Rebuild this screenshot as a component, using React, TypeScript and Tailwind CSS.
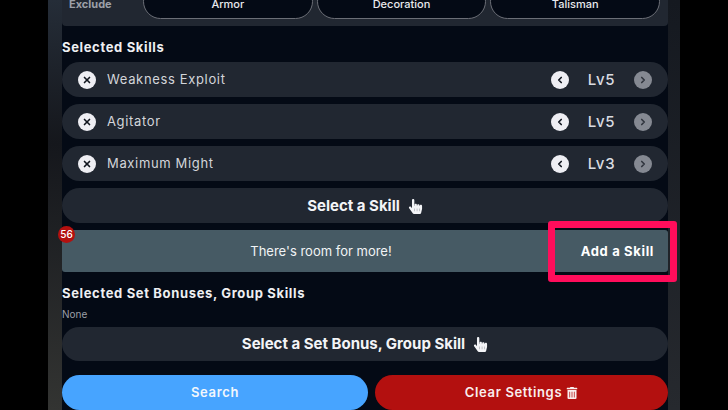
import { useState } from 'react';
import { FaHandPointer, FaTrashAlt } from 'react-icons/fa';
import { ChevronLeft, ChevronRight, X } from 'lucide-react';

interface Skill {
  name: string;
  level: number;
  max: number;
}

const initialSkills: Skill[] = [
  { name: 'Weakness Exploit', level: 5, max: 5 },
  { name: 'Agitator', level: 5, max: 5 },
  { name: 'Maximum Might', level: 3, max: 3 },
];

const excludeTypes = ['Armor', 'Decoration', 'Talisman'];

const roundButton =
  'flex size-[18px] shrink-0 items-center justify-center rounded-full bg-[#eeeef3] text-[#10151e] disabled:bg-[#858992] disabled:text-[#30353e]';

interface SkillRowProps {
  skill: Skill;
  onLevel: (level: number) => void;
  onRemove: () => void;
}

function SkillRow({ skill, onLevel, onRemove }: SkillRowProps) {
  return (
    <li className="flex h-[35px] items-center rounded-full bg-[#212731] px-4">
      <button className={roundButton} aria-label={`Remove ${skill.name}`} onClick={onRemove}>
        <X size={10} strokeWidth={4} />
      </button>
      <span className="ml-[11px] flex-1 text-[13px] tracking-wider text-[#d3d5da]">{skill.name}</span>
      <button
        className={roundButton}
        aria-label={`Lower ${skill.name}`}
        disabled={skill.level <= 1}
        onClick={() => onLevel(skill.level - 1)}
      >
        <ChevronLeft size={10} strokeWidth={4} />
      </button>
      <span className="w-[65px] pt-px text-center text-[15px] font-medium tracking-wider text-[#d9dbe0]">
        Lv{skill.level}
      </span>
      <button
        className={roundButton}
        aria-label={`Raise ${skill.name}`}
        disabled={skill.level >= skill.max}
        onClick={() => onLevel(skill.level + 1)}
      >
        <ChevronRight size={10} strokeWidth={4} />
      </button>
    </li>
  );
}

function SelectButton({ label }: { label: string }) {
  return (
    <button className="flex h-[35px] w-full items-center justify-center gap-2 rounded-full bg-[#212731] pt-px text-[15px] font-bold text-[#f3f4f7]">
      {label}
      <FaHandPointer size={15} />
    </button>
  );
}

export default function App() {
  const [skills, setSkills] = useState(initialSkills);

  const setLevel = (name: string, level: number) =>
    setSkills(skills.map(s => (s.name === name ? { ...s, level } : s)));

  return (
    <div className="h-screen overflow-hidden bg-black px-12 font-['Inter',sans-serif]">
      <div className="h-full bg-linear-to-b from-[#252d38] via-[#15171c] via-35% to-[#333432] pl-[14px]">
        <div className="flex h-full bg-linear-to-b from-[#151920] to-[#26292e] pr-3">
          <main className="flex h-full min-w-0 flex-1 flex-col bg-[#040a15]">
            <section className="-mt-4 flex shrink-0 items-center rounded-b bg-[#212731] pr-2 pb-[7px] pl-[7px]">
              <h2 className="w-[74px] pt-1 text-[11px] leading-3 font-bold text-[#9da0a8]">Exclude</h2>
              <div className="grid flex-1 grid-cols-3 gap-1">
                {excludeTypes.map(type => (
                  <button
                    key={type}
                    className="h-[35px] rounded-full border border-[#6b6e76] bg-[#040a15] pt-[5px] text-[11px] leading-3 font-medium text-[#e8e9ed]"
                  >
                    {type}
                  </button>
                ))}
              </div>
            </section>

            <h2 className="mt-[13px] text-[13px] leading-4 font-bold tracking-wider text-[#eeeff2]">
              Selected Skills
            </h2>
            <ul className="mt-[7px] flex flex-col gap-[7px]">
              {skills.map(skill => (
                <SkillRow
                  key={skill.name}
                  skill={skill}
                  onLevel={level => setLevel(skill.name, level)}
                  onRemove={() => setSkills(skills.filter(s => s.name !== skill.name))}
                />
              ))}
            </ul>
            <div className="mt-[7px]">
              <SelectButton label="Select a Skill" />
            </div>

            <section className="relative mt-[7px] flex h-[42px] shrink-0 rounded-[3px] bg-[#465a64]">
              <span className="absolute -top-1 -left-1 flex size-[17px] items-center justify-center rounded-full bg-[#b3100f] text-[10px] font-medium text-white">
                56
              </span>
              <p className="flex-1 self-center pt-px pl-8 text-center text-[13px] text-[#f1f3f5]">
                There's room for more!
              </p>
              <div className="relative w-[120px]">
                <button className="h-full w-full pt-px pr-[14px] text-right text-[13px] font-bold tracking-wider text-white">
                  Add a Skill
                </button>
                <div className="pointer-events-none absolute -inset-x-[9px] -top-[9px] -bottom-[10px] ml-[9px] rounded-[3px] border-[7px] border-[#ff0d5b]" />
              </div>
            </section>

            <h2 className="mt-[13px] text-[13px] leading-4 font-bold tracking-wider text-[#eeeff2]">
              Selected Set Bonuses, Group Skills
            </h2>
            <p className="mt-[5px] mb-[5px] text-[10px] leading-4 text-[#9c9fa7]">None</p>
            <SelectButton label="Select a Set Bonus, Group Skill" />

            <div className="mt-[14px] grid grid-cols-[306fr_293fr] gap-[7px]">
              <button className="h-[35px] rounded-full bg-[#47a4ff] pt-px text-[13px] font-semibold tracking-wider text-[#f3f7fc]">
                Search
              </button>
              <button className="flex h-[35px] items-center justify-center gap-1 rounded-full bg-[#b3100f] pt-px text-[13px] font-semibold tracking-wider text-[#f9eeee]">
                Clear Settings
                <FaTrashAlt size={12} />
              </button>
            </div>
          </main>
        </div>
      </div>
    </div>
  );
}
